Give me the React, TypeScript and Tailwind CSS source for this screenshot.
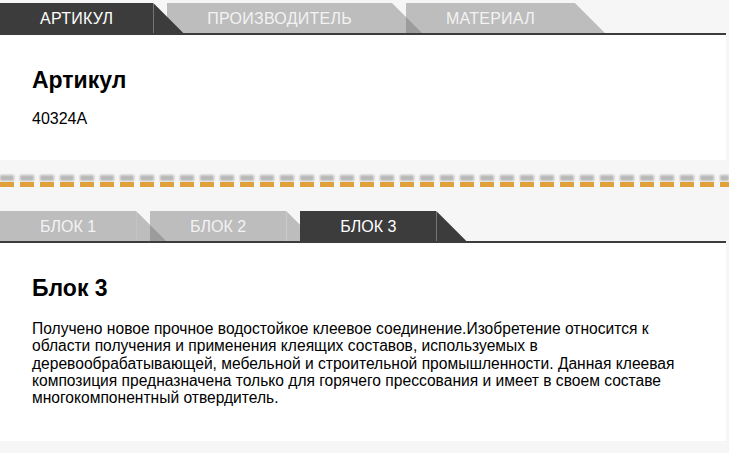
import React from "react";

type TabDef = { label: string; active?: boolean };

function Tabs({ tabs, wide }: { tabs: TabDef[]; wide?: boolean }) {
  const zs = ["z-20", "z-10", "z-[5]", "z-0"];
  return (
    <div className="flex h-[30px] items-stretch">
      {tabs.map((t, i) => {
        const isLast = i === tabs.length - 1;
        const z = t.active ? "z-30" : zs[i];
        const tri = t.active
          ? "bg-[#3c3c3c]"
          : isLast
          ? "bg-[#bdbdbd]"
          : "bg-[linear-gradient(90deg,#bdbdbd_14px,#9c9c9c_14px)]";
        return (
          <div
            key={t.label}
            className={`relative flex items-center px-[40px] text-[16px] leading-none ${
              wide ? "tracking-[0.25px]" : "tracking-normal"
            } ${z} ${i > 0 ? "ml-[14px]" : ""} ${
              t.active ? "bg-[#3c3c3c] text-white" : "bg-[#bdbdbd] text-[#f3f3f3]"
            }`}
          >
            <span className="pt-[1px]">{t.label}</span>
            <span
              className={`absolute left-full top-0 h-[30px] w-[30px] [clip-path:polygon(0_0,100%_100%,0_100%)] ${tri}`}
            />
          </div>
        );
      })}
    </div>
  );
}

export default function App() {
  return (
    <div
      className="min-h-screen w-full bg-[#f6f6f6] text-black"
      style={{ fontFamily: '"Liberation Sans", Arial, sans-serif' }}
    >
      {/* Section 1 */}
      <div className="pt-[3px]">
        <Tabs
          wide
          tabs={[
            { label: "АРТИКУЛ", active: true },
            { label: "ПРОИЗВОДИТЕЛЬ" },
            { label: "МАТЕРИАЛ" },
          ]}
        />
        <div className="h-[2px] w-[726px] bg-[#3c3c3c]" />
        <div className="h-[125px] w-[726px] bg-white pl-[32px] pt-[32px]">
          <h2 className="text-[23px] font-bold leading-[26px]">Артикул</h2>
          <p className="mt-[17px] text-[16px] leading-[18px]">40324A</p>
        </div>
      </div>

      {/* Divider */}
      <div className="relative h-[51px] w-full">
        <div className="absolute left-0 right-0 top-[15px] h-[6px] bg-[repeating-linear-gradient(90deg,#a9a9a9_0_14px,transparent_14px_20px)] opacity-80 blur-[1px]" />
        <div className="absolute left-0 right-0 top-[22px] h-[5px] bg-[repeating-linear-gradient(90deg,#e0a03a_0_14px,transparent_14px_20px)]" />
      </div>

      {/* Section 2 */}
      <div>
        <Tabs
          tabs={[
            { label: "БЛОК 1" },
            { label: "БЛОК 2" },
            { label: "БЛОК 3", active: true },
          ]}
        />
        <div className="h-[2px] w-[726px] bg-[#3c3c3c]" />
        <div className="h-[198px] w-[726px] bg-white pl-[32px] pr-[28px] pt-[32px]">
          <h2 className="text-[23px] font-bold leading-[26px]">Блок 3</h2>
          <p className="mt-[19px] text-[15.6px] leading-[17.3px]">
            Получено новое прочное водостойкое клеевое соединение.Изобретение относится к области
            получения и применения клеящих составов, используемых в деревообрабатывающей, мебельной и
            строительной промышленности. Данная клеевая композиция предназначена только для горячего
            прессования и имеет в своем составе многокомпонентный отвердитель.
          </p>
        </div>
      </div>
    </div>
  );
}
